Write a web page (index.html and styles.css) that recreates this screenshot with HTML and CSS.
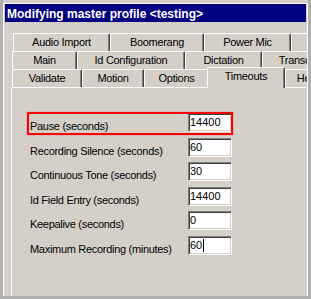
FILE: index.html
```html
<!DOCTYPE html>
<html lang="en">
<head>
    <meta charset="UTF-8">
    <title>Modifying master profile</title>
    <link rel="stylesheet" href="styles.css">
</head>
<body>
    <div class="window">
        <div class="frame">
            <div class="titlebar">Modifying master profile &lt;testing&gt;</div>
            <div class="client">
                <div class="tabs">
                    <div class="tab-row row-back">
                        <div class="tab tab-audio">Audio Import</div>
                        <div class="tab tab-boomerang">Boomerang</div>
                        <div class="tab tab-powermic">Power Mic</div>
                        <div class="tab tab-more"></div>
                    </div>
                    <div class="tab-row">
                        <div class="tab tab-main">Main</div>
                        <div class="tab tab-idconf">Id Configuration</div>
                        <div class="tab tab-dictation">Dictation</div>
                        <div class="tab tab-transc">Transcription</div>
                    </div>
                    <div class="tab-row">
                        <div class="tab tab-validate">Validate</div>
                        <div class="tab tab-motion">Motion</div>
                        <div class="tab tab-options">Options</div>
                        <div class="tab tab-timeouts selected">Timeouts</div>
                        <div class="tab tab-help">Help</div>
                    </div>
                </div>

                <div class="panel">
                    <div class="form">
                        <div class="row">
                            <span class="label">Pause (seconds)</span>
                            <span class="field">14400</span>
                            <span class="callout"></span>
                        </div>
                        <div class="row">
                            <span class="label">Recording Silence (seconds)</span>
                            <span class="field">60</span>
                        </div>
                        <div class="row">
                            <span class="label">Continuous Tone (seconds)</span>
                            <span class="field">30</span>
                        </div>
                        <div class="row">
                            <span class="label">Id Field Entry (seconds)</span>
                            <span class="field">14400</span>
                        </div>
                        <div class="row">
                            <span class="label">Keepalive (seconds)</span>
                            <span class="field">0</span>
                        </div>
                        <div class="row">
                            <span class="label">Maximum Recording (minutes)</span>
                            <span class="field">60<span class="caret"></span></span>
                        </div>
                    </div>
                </div>
            </div>
        </div>
    </div>
</body>
</html>
```

FILE: styles.css
```css
body {
    margin: 0;
    background: #b0b0b0;
    font-family: "Liberation Sans", Arial, sans-serif;
    font-size: 11px;
    letter-spacing: -0.3px;
    color: #000;
}
.window {
    width: 305px;
    height: 296px;
    margin-left: 3px;
    box-sizing: border-box;
    background: #d4d0c8;
    border-top: 3px solid #d4d0c8;
}
.frame {
    height: 100%;
    box-sizing: border-box;
    border-top: 1px solid #fff;
    border-left: 1px solid #fff;
    border-right: 1px solid #fff;
    display: flex;
    flex-direction: column;
}
.titlebar {
    flex: none;
    height: 18px;
    margin: 0 1px;
    padding: 1px 0 0 2px;
    box-sizing: border-box;
    background: #000080;
    color: #fff;
    font-size: 12px;
    font-weight: bold;
    letter-spacing: 0;
    line-height: 18px;
    white-space: nowrap;
}
.client {
    flex: 1;
    padding-top: 11px;
    overflow: hidden;
    display: flex;
    flex-direction: column;
}
/* tab strip: three justified rows */
.tabs {
    margin-left: 8px;
}
.tab-row {
    display: flex;
    height: 18px;
    white-space: nowrap;
}
.row-back {
    margin-left: 1px;
}
.tab {
    flex: none;
    height: 18px;
    box-sizing: border-box;
    border-top: 1px solid #fff;
    border-left: 1px solid #fff;
    border-right: 1px solid #404040;
    border-radius: 2px 2px 0 0;
    box-shadow: inset -1px 0 #808080;
    line-height: 17px;
    text-align: center;
    overflow: hidden;
}
.tab-audio { width: 97px; }
.tab-boomerang { width: 94px; }
.tab-powermic { width: 87px; }
.tab-more { width: 40px; }
.tab-main { width: 65px; }
.tab-idconf { width: 108px; }
.tab-dictation { width: 77px; }
.tab-transc { width: 93px; }
.tab-validate { width: 70px; }
.tab-motion { width: 62px; }
.tab-options { width: 65px; }
.tab-timeouts { width: 78px; }
.tab-help { width: 45px; }
.tab.selected {
    position: relative;
    z-index: 2;
    height: 21px;
    margin: -2px 0 0 -2px;
    background: #d4d0c8;
}
.panel {
    flex: 1;
    margin-left: 7px;
    border-top: 1px solid #fff;
    border-left: 1px solid #fff;
}
.form {
    display: flex;
    flex-direction: column;
    gap: 5.5px;
    padding: 25px 0 0 15px;
}
.row {
    position: relative;
    display: flex;
    height: 19px;
}
.label {
    width: 161px;
    box-sizing: border-box;
    padding: 7px 0 0 3px;
    line-height: 12px;
    white-space: nowrap;
}
.field {
    width: 44px;
    height: 19px;
    box-sizing: border-box;
    padding-left: 1px;
    background: #fff;
    border: 1px solid;
    border-color: #808080 #fff #fff #808080;
    box-shadow: inset 1px 1px #404040, inset -1px -1px #d4d0c8;
    line-height: 17px;
    letter-spacing: 0;
}
.caret {
    display: inline-block;
    width: 1px;
    height: 13px;
    margin-left: 1px;
    background: #000;
    vertical-align: -3px;
}
/* red highlight drawn over the first row */
.callout {
    position: absolute;
    left: 0;
    top: -1px;
    width: 206px;
    height: 23px;
    box-sizing: border-box;
    border: 2px solid #f00;
    box-shadow: 0 0 1px rgba(255, 0, 0, 0.6);
}
```
